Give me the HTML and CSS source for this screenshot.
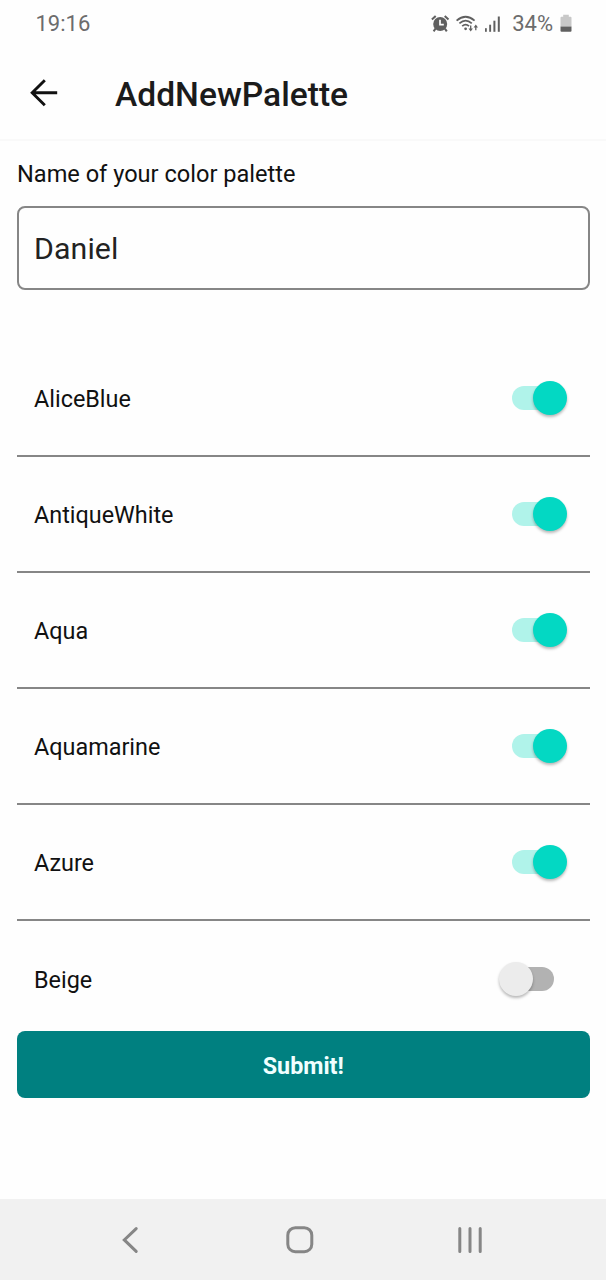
FILE: index.html
```html
<!DOCTYPE html>
<html lang="en">
<head>
<meta charset="utf-8">
<title>AddNewPalette</title>
<link rel="stylesheet" href="styles.css">
</head>
<body>
<div class="status">
  <span class="time">19:16</span>
  <svg class="status-icons" width="72" height="20" viewBox="0 0 72 20">
    <g fill="none" stroke="#606060">
      <circle cx="9.2" cy="10" r="7" fill="#606060" stroke="none"/>
      <path d="M.9 5.6L4.7 2M17.5 5.6L13.7 2M4.5 14.6L2.6 17.4M13.9 14.6L15.8 17.4" stroke-width="2"/>
      <path d="M9 5.8V10.6H12.8" stroke="#fff" stroke-width="1.7"/>
      <path d="M25.6 6.6Q34.6 -1.2 43.6 6.6M28.4 9.4Q34.6 3.8 40.8 9.4M31.2 12.2Q34.6 9 38 12.2" stroke-width="1.8"/>
      <path d="M39.7 11.6v4M44.8 16.2v-4" stroke-width="1.3"/>
    </g>
    <g fill="#606060">
      <circle cx="34.6" cy="14.8" r="1.4"/>
      <path d="M37.5 14.6h4.4l-2.2 3zM42.6 13.4h4.4l-2.2-3z"/>
      <rect x="54" y="14.2" width="1.8" height="3.6"/>
      <rect x="58.2" y="10.7" width="1.9" height="7.1"/>
      <rect x="62.4" y="6.7" width="2" height="11.1"/>
      <rect x="66.8" y="2.5" width="2" height="15.3"/>
    </g>
  </svg>
  <span class="percent">34%</span>
  <svg class="battery" width="12" height="20" viewBox="0 0 12 20">
    <path d="M1.5 2.8H3.2V.8H8.8V2.8H10.5Q11.5 2.8 11.5 3.8V12.4H.5V3.8Q.5 2.8 1.5 2.8Z" fill="#c8c8c8"/>
    <path d="M.5 12.4H11.5V16.8Q11.5 17.8 10.5 17.8H1.5Q.5 17.8 .5 16.8Z" fill="#606060"/>
  </svg>
</div>
<header class="header">
  <svg class="back" width="28" height="28" viewBox="0 0 28 28" fill="none" stroke="#111" stroke-width="2.9">
    <path d="M27.2 13.8H3M14.8 1.2L2.2 13.8L14.8 26.2"/>
  </svg>
  <h1 class="title">AddNewPalette</h1>
</header>
<main class="content">
  <label class="label" for="name">Name of your color palette</label>
  <input class="name" id="name" type="text" value="Daniel">
  <ul class="colors">
    <li class="row"><span>AliceBlue</span><span class="switch on"></span></li>
    <li class="row"><span>AntiqueWhite</span><span class="switch on"></span></li>
    <li class="row"><span>Aqua</span><span class="switch on"></span></li>
    <li class="row"><span>Aquamarine</span><span class="switch on"></span></li>
    <li class="row"><span>Azure</span><span class="switch on"></span></li>
    <li class="row"><span>Beige</span><span class="switch"></span></li>
  </ul>
  <button class="submit">Submit!</button>
</main>
<nav class="nav">
  <svg width="30" height="30" viewBox="0 0 30 30"><path d="M21.2 3.6L9.3 14.9L21.2 26.4"/></svg>
  <svg width="30" height="30" viewBox="0 0 30 30"><rect x="2.8" y="2.7" width="24" height="24" rx="7.5"/></svg>
  <svg width="30" height="30" viewBox="0 0 30 30"><path d="M4.8 3.6V26.4M15 3.6V26.4M25.2 3.6V26.4"/></svg>
</nav>
</body>
</html>
```
FILE: styles.css
```css
* { box-sizing: border-box; }
body {
  margin: 0;
  height: 1280px;
  display: flex;
  flex-direction: column;
  background: #fefefe;
  color: #111;
  font-family: Roboto, sans-serif;
  font-size: 23.4px;
  overflow: hidden;
}
.status {
  height: 47px;
  padding: 0 34.5px 0 35.5px;
  display: flex;
  align-items: center;
  color: #6c6c6c;
  font-size: 22px;
}
.status-icons { margin-left: auto; }
.percent { margin: 0 6.5px 0 9px; }
.header {
  height: 94px;
  padding: 0 30px;
  display: flex;
  align-items: center;
  border-bottom: 2px solid #f9f9f9;
}
.title {
  margin: 3px 0 0 57px;
  font-size: 33.6px;
  font-weight: 500;
  color: #1b1b1b;
}
.content {
  flex: 1;
  padding: 17px 16.5px 0 17px;
  display: flex;
  flex-direction: column;
}
.label { height: 32px; line-height: 32px; margin-bottom: 15.5px; font-size: 23.58px; }
.name {
  height: 84px;
  padding: 2px 15px 0;
  border: 2px solid #868686;
  border-radius: 8px;
  background: transparent;
  color: #222;
  font: 30.3px Roboto, sans-serif;
  letter-spacing: .1px;
}
.colors {
  height: 690.5px;
  margin: 51px 0 0;
  padding: 0;
  list-style: none;
}
.row {
  height: 116.2px;
  padding: 2px 22.5px 0 17px;
  display: flex;
  align-items: center;
  justify-content: space-between;
  border-bottom: 2px solid #868686;
}
.row:last-child { border-bottom-color: transparent; }
.switch {
  width: 68px;
  height: 34px;
  display: grid;
  align-items: center;
  margin-top: -2px;
}
.switch::before, .switch::after { content: ""; grid-area: 1 / 1; }
.switch::before {
  width: 42px;
  height: 24px;
  margin-left: 13px;
  border-radius: 12px;
  background: #b2b2b2;
}
.switch::after {
  width: 34px;
  height: 34px;
  border-radius: 50%;
  background: #ececec;
  box-shadow: 0 2px 3px rgba(0, 0, 0, .28);
}
.switch.on::before { background: #b0f3ea; }
.switch.on::after { justify-self: end; background: #03d8c3; }
.submit {
  height: 67px;
  border: 0;
  border-radius: 8px;
  background: #008080;
  color: #f0ffff;
  font: bold 23.3px Roboto, sans-serif;
  padding: 2px 0 0;
}
.nav {
  height: 81px;
  padding: 0 121px 0 115px;
  display: flex;
  align-items: center;
  justify-content: space-between;
  background: #f1f1f1;
}
.nav svg { fill: none; stroke: #868686; stroke-width: 3; stroke-linecap: round; }
```
